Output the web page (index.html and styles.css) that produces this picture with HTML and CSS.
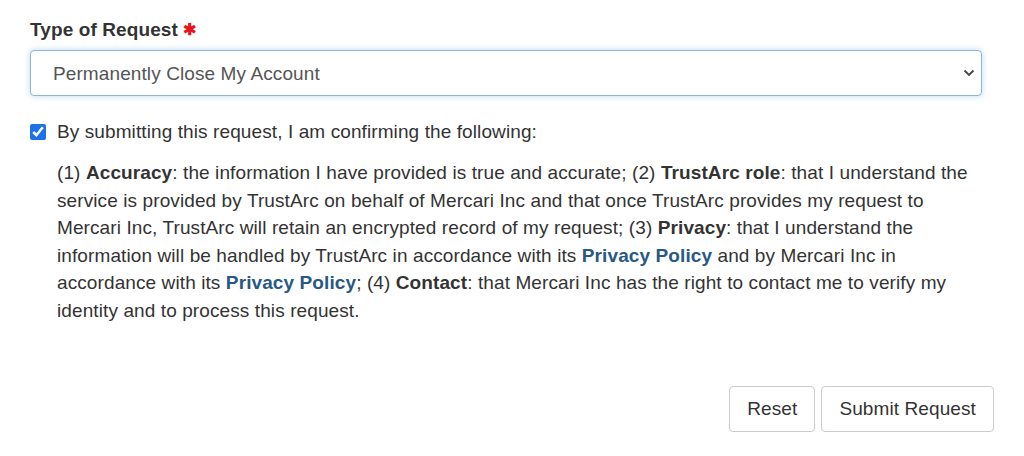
FILE: index.html
```html
<!DOCTYPE html>
<html lang="en">
<head>
<meta charset="utf-8">
<title>Request Form</title>
<link rel="stylesheet" href="styles.css">
</head>
<body>
<form class="form">
  <div class="field">
    <label class="label" for="type">Type of Request <span class="req">&#x2731;</span></label>
    <div class="select-wrap">
      <select id="type" class="select">
        <option>Permanently Close My Account</option>
      </select>
      <svg class="chev" width="12" height="8" viewBox="0 0 12 8"><path d="M1.5 1.5 L6 6 L10.5 1.5" fill="none" stroke="#444" stroke-width="1.8"/></svg>
    </div>
  </div>
  <div class="confirm">
    <label class="check-row"><input type="checkbox" class="check" checked> <span>By submitting this request, I am confirming the following:</span></label>
    <p class="terms">(1) <b>Accuracy</b>: the information I have provided is true and accurate; (2) <b>TrustArc role</b>: that I understand the service is provided by TrustArc on behalf of Mercari Inc and that once TrustArc provides my request to Mercari Inc, TrustArc will retain an encrypted record of my request; (3) <b>Privacy</b>: that I understand the information will be handled by TrustArc in accordance with its <a href="#">Privacy Policy</a> and by Mercari Inc in accordance with its <a href="#">Privacy Policy</a>; (4) <b>Contact</b>: that Mercari Inc has the right to contact me to verify my identity and to process this request.</p>
  </div>
  <div class="actions">
    <button type="reset" class="btn">Reset</button>
    <button type="button" class="btn">Submit Request</button>
  </div>
</form>
</body>
</html>
```
FILE: styles.css
```css
html, body {
  margin: 0;
  padding: 0;
  background: #fff;
}
body {
  font-family: "Liberation Sans", Arial, sans-serif;
  font-size: 19px;
  letter-spacing: 0.1px;
  color: #333;
}
.form {
  padding: 18px 30px 0 30px;
  width: 1024px;
  box-sizing: border-box;
}
.field {
  width: 952px;
}
.label {
  display: block;
  font-weight: bold;
  font-size: 19px;
  line-height: 24px;
  margin-bottom: 8px;
}
.req {
  color: #e8141c;
  font-size: 16px;
  vertical-align: 1px;
}
.select-wrap {
  position: relative;
}
.select {
  appearance: none;
  -webkit-appearance: none;
  width: 100%;
  height: 46px;
  box-sizing: border-box;
  border: 1px solid #8fb6d8;
  border-radius: 4px;
  background: #fff;
  padding: 0 40px 0 22px;
  font-family: inherit;
  font-size: 19px;
  letter-spacing: 0.1px;
  color: #555;
  box-shadow: 0 0 6px rgba(102, 175, 233, 0.45);
  outline: none;
}
.chev {
  position: absolute;
  right: 7px;
  top: 19px;
  pointer-events: none;
}
.confirm {
  margin-top: 24px;
}
.check-row {
  display: flex;
  align-items: center;
  gap: 11px;
  line-height: 24px;
}
.check {
  width: 16px;
  height: 16px;
  margin: 0;
  accent-color: #1a73e8;
}
.terms {
  margin: 15px 0 0 27px;
  width: 925px;
  line-height: 27.6px;
}
.terms b {
  font-weight: bold;
}
.terms a {
  color: #285884;
  font-weight: bold;
  text-decoration: none;
}
.actions {
  display: flex;
  justify-content: flex-end;
  gap: 6px;
  margin-top: 61px;
  width: 964px;
}
.btn {
  height: 46px;
  padding: 0 17px;
  border: 1px solid #ccc;
  border-radius: 4px;
  background: #fff;
  font-family: inherit;
  font-size: 19px;
  letter-spacing: 0.1px;
  color: #333;
}
```
